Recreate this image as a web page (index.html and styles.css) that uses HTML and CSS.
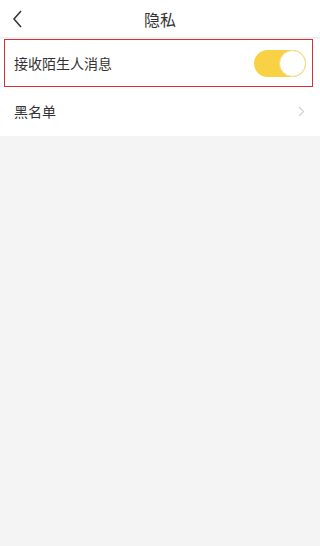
FILE: index.html
```html
<!DOCTYPE html>
<html lang="zh-CN">
<head>
    <meta charset="UTF-8">
    <meta name="viewport" content="width=device-width, initial-scale=1.0">
    <title>隐私</title>
    <link rel="stylesheet" href="styles.css">
</head>
<body>
    <div class="header">
        <span class="back">
            <svg width="12" height="18" viewBox="0 0 12 18"><path d="M10 1 L3 9 L10 17" fill="none" stroke="#333" stroke-width="1.5"/></svg>
        </span>
        <h1>隐私</h1>
    </div>

    <div class="list">
        <div class="row row-marked">
            <span class="label">接收陌生人消息</span>
            <span class="switch on"><span class="knob"></span></span>
        </div>
        <div class="row">
            <span class="label">黑名单</span>
            <svg class="arrow" width="7" height="11" viewBox="0 0 7 11"><path d="M1 1 L5.5 5.5 L1 10" fill="none" stroke="#d0d0d0" stroke-width="1.2"/></svg>
        </div>
    </div>
</body>
</html>
```

FILE: styles.css
```css
body { margin: 0; background: #f4f4f4; font-family: "Noto Sans CJK SC", "Noto Sans", sans-serif; color: #333; height: 546px; }
.header { height: 37px; background: #fff; display: flex; align-items: center; justify-content: center; position: relative; border-bottom: 1px solid #eee; }
.header h1 { margin: 0; font-size: 16px; font-weight: normal; color: #333; }
.back { position: absolute; left: 11px; top: 9px; }
.list { background: #fff; padding-bottom: 1px; }
.row { height: 48px; display: flex; align-items: center; justify-content: space-between; padding: 0 14px; box-sizing: border-box; }
.row-marked { height: 48px; margin: 1px 7px 0 4px; padding: 0 6px 0 9px; border: 1px solid #d2303a; }
.label { font-size: 14px; color: #333; }
.switch { width: 52px; height: 27px; border-radius: 14px; background: #f8d244; position: relative; display: block; }
.knob { position: absolute; right: 0; top: 0; width: 25px; height: 25px; border-radius: 50%; background: #fff; border: 1px solid #f0dc8a; }
.arrow { margin-right: 1px; }
```
